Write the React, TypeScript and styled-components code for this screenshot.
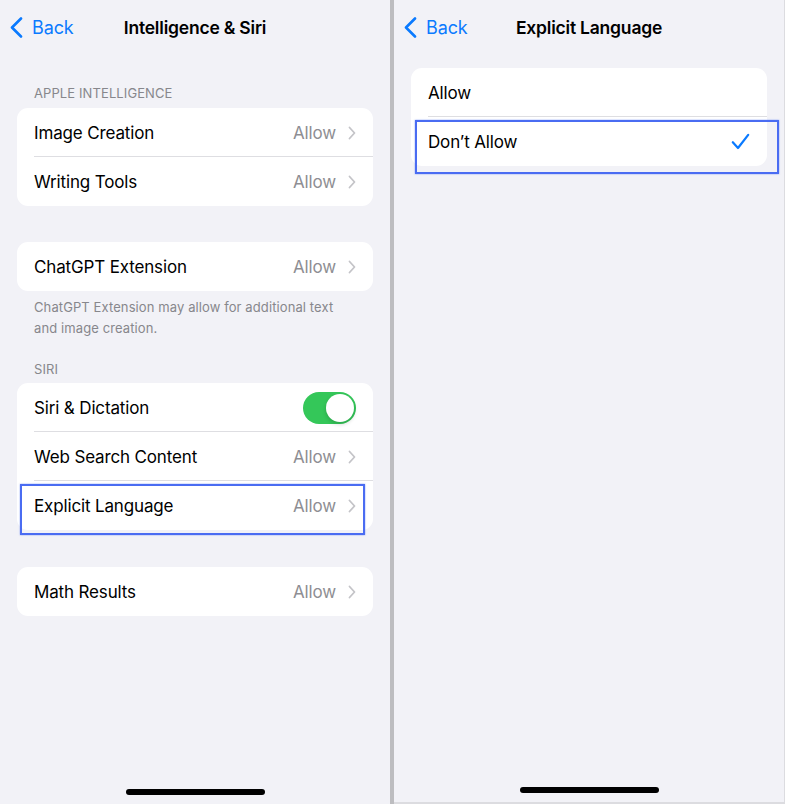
import styled, { createGlobalStyle } from 'styled-components';

const GlobalStyle = createGlobalStyle`
    html, body {
        margin: 0;
        padding: 0;
        background: #f2f2f7;
    }
    body {
        font-family: Inter, 'Noto Sans', 'Liberation Sans', sans-serif;
        -webkit-font-smoothing: antialiased;
    }
`;

const Screens = styled.div`
    display: flex;
    width: 785px;
    height: 804px;
    overflow: hidden;
`;

const Panel = styled.div<{ $width: number; $edge?: boolean }>`
    position: relative;
    display: flex;
    flex-direction: column;
    width: ${(p) => p.$width}px;
    flex: none;
    background: #f2f2f7;
    box-sizing: border-box;
    padding-bottom: 9px;
    ${(p) => p.$edge && 'border-right: 1px solid #dcdce0; border-bottom: 2px solid #dcdce0;'}
`;

const Divider = styled.div`
    width: 4px;
    flex: none;
    background: #bdbdc0;
`;

const NavBar = styled.div`
    display: grid;
    grid-template-columns: 1fr auto 1fr;
    align-items: center;
    height: 54px;
    flex: none;
`;

const BackButton = styled.div`
    display: flex;
    align-items: center;
    gap: 9px;
    padding-left: 10px;
    color: #0a7aff;
    font-size: 18px;
    letter-spacing: -0.1px;
`;

const Title = styled.div`
    font-size: 17.5px;
    font-weight: 600;
    color: #000;
    letter-spacing: -0.2px;
`;

const Content = styled.div`
    display: flex;
    flex-direction: column;
    padding: 0 17px;
`;

const SectionHeader = styled.div<{ $top: number }>`
    margin-top: ${(p) => p.$top}px;
    padding-left: 17px;
    height: 16px;
    line-height: 16px;
    font-size: 13px;
    color: #87878c;
    text-transform: uppercase;
    letter-spacing: 0.1px;
`;

const Card = styled.div<{ $top: number }>`
    margin-top: ${(p) => p.$top}px;
    background: #fff;
    border-radius: 11px;
`;

const Row = styled.div<{ $last?: boolean }>`
    position: relative;
    display: flex;
    align-items: center;
    height: 49px;
    padding: 0 17px;
    &::after {
        content: '';
        display: ${(p) => (p.$last ? 'none' : 'block')};
        position: absolute;
        left: 17px;
        right: 0;
        bottom: 0;
        height: 1px;
        background: #dedee2;
    }
`;

const Label = styled.div`
    flex: 1;
    font-size: 17px;
    color: #000;
    letter-spacing: -0.15px;
`;

const Value = styled.div`
    display: flex;
    align-items: center;
    gap: 12px;
    font-size: 17px;
    color: #8e8e93;
    letter-spacing: -0.15px;
`;

const Footer = styled.div`
    padding: 6px 17px 0;
    font-size: 13px;
    line-height: 21px;
    color: #87878c;
    letter-spacing: 0.1px;
`;

const Toggle = styled.div<{ $on: boolean }>`
    position: relative;
    width: 53px;
    height: 32px;
    border-radius: 16px;
    background: ${(p) => (p.$on ? '#34c759' : '#e9e9eb')};
    &::after {
        content: '';
        position: absolute;
        top: 2px;
        ${(p) => (p.$on ? 'right: 2px;' : 'left: 2px;')}
        width: 28px;
        height: 28px;
        border-radius: 50%;
        background: #fff;
        box-shadow: 0 2px 4px rgba(0, 0, 0, 0.18);
    }
`;

// blue callout box drawn over a row
const Highlight = styled.div<{ $inset: [number, number, number, number] }>`
    position: absolute;
    top: ${(p) => p.$inset[0]}px;
    right: ${(p) => p.$inset[1]}px;
    bottom: ${(p) => p.$inset[2]}px;
    left: ${(p) => p.$inset[3]}px;
    border: 2.5px solid #4a6cf2;
    box-shadow: 0 0 1.5px rgba(74, 108, 242, 0.7);
    pointer-events: none;
`;

const HomeIndicator = styled.div`
    margin: auto auto 0;
    width: 139px;
    height: 6px;
    border-radius: 3px;
    background: #000;
`;

const BackChevron = () => (
    <svg width="13" height="21" viewBox="0 0 13 21" fill="none">
        <path d="M11 1.5 L2 10.5 L11 19.5" stroke="#0a7aff" strokeWidth="2.6" strokeLinecap="round" strokeLinejoin="round" />
    </svg>
);

const RowChevron = () => (
    <svg width="8" height="14" viewBox="0 0 8 14" fill="none">
        <path d="M1.5 1.5 L6.5 7 L1.5 12.5" stroke="#c4c4c8" strokeWidth="1.8" strokeLinecap="round" strokeLinejoin="round" />
    </svg>
);

const Check = () => (
    <svg width="19" height="17" viewBox="0 0 19 17" fill="none">
        <path d="M1.8 9.2 L7 15 L17.2 1.8" stroke="#0a7aff" strokeWidth="2.2" strokeLinecap="round" strokeLinejoin="round" />
    </svg>
);

const Nav = ({ title }: { title: string }) => (
    <NavBar>
        <BackButton>
            <BackChevron />
            Back
        </BackButton>
        <Title>{title}</Title>
        <div />
    </NavBar>
);

const LinkRow = ({ label, value = 'Allow', last, children }: { label: string; value?: string; last?: boolean; children?: React.ReactNode }) => (
    <Row $last={last}>
        <Label>{label}</Label>
        <Value>
            {value}
            <RowChevron />
        </Value>
        {children}
    </Row>
);

export default function App() {
    return (
        <>
            <GlobalStyle />
            <Screens>
                <Panel $width={390}>
                    <Nav title="Intelligence & Siri" />
                    <Content>
                        <SectionHeader $top={31}>Apple Intelligence</SectionHeader>
                        <Card $top={7}>
                            <LinkRow label="Image Creation" />
                            <LinkRow label="Writing Tools" last />
                        </Card>

                        <Card $top={36}>
                            <LinkRow label="ChatGPT Extension" last />
                        </Card>
                        <Footer>
                            ChatGPT Extension may allow for additional text
                            <br />
                            and image creation.
                        </Footer>

                        <SectionHeader $top={22}>Siri</SectionHeader>
                        <Card $top={6}>
                            <Row>
                                <Label>Siri &amp; Dictation</Label>
                                <Toggle $on />
                            </Row>
                            <LinkRow label="Web Search Content" />
                            <LinkRow label="Explicit Language" last>
                                <Highlight $inset={[3, 8, -5, 3]} />
                            </LinkRow>
                        </Card>

                        <Card $top={37}>
                            <LinkRow label="Math Results" last />
                        </Card>
                    </Content>
                    <HomeIndicator />
                </Panel>

                <Divider />

                <Panel $width={391} $edge>
                    <Nav title="Explicit Language" />
                    <Content>
                        <Card $top={14}>
                            <Row>
                                <Label>Allow</Label>
                            </Row>
                            <Row $last>
                                <Label>Don’t Allow</Label>
                                <Check />
                                <Highlight $inset={[3, -12, -8, 4]} />
                            </Row>
                        </Card>
                    </Content>
                    <HomeIndicator />
                </Panel>
            </Screens>
        </>
    );
}
